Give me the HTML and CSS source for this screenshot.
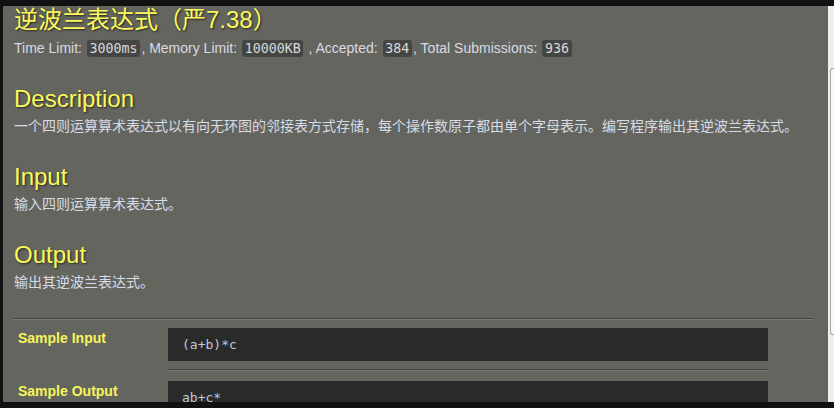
FILE: index.html
```html
<!DOCTYPE html>
<html lang="zh">
<head>
<meta charset="utf-8">
<title>逆波兰表达式</title>
<link rel="stylesheet" href="styles.css">
</head>
<body>
<div class="window">
  <main class="panel">
    <div class="content">
      <h1 class="title">逆波兰表达式（严7.38）</h1>
      <div class="meta">Time Limit: <code class="badge">3000ms</code>, Memory Limit: <code class="badge">10000KB</code> , Accepted: <code class="badge">384</code>, Total Submissions: <code class="badge">936</code></div>

      <h2 class="heading">Description</h2>
      <p class="text">一个四则运算算术表达式以有向无环图的邻接表方式存储，每个操作数原子都由单个字母表示。编写程序输出其逆波兰表达式。</p>

      <h2 class="heading">Input</h2>
      <p class="text">输入四则运算算术表达式。</p>

      <h2 class="heading">Output</h2>
      <p class="text">输出其逆波兰表达式。</p>

      <hr class="rule">

      <div class="samples">
        <div class="label">Sample Input</div>
        <div class="cell">
          <pre class="sample">(a+b)*c</pre>
          <hr class="rule rule-cell">
        </div>
        <div class="label">Sample Output</div>
        <div class="cell">
          <pre class="sample">ab+c*</pre>
        </div>
      </div>
    </div>
  </main>
  <div class="scrollbar"><div class="thumb"></div></div>
</div>
</body>
</html>
```

FILE: styles.css
```css
html, body {
  margin: 0;
  padding: 0;
  background: #111111;
  overflow: hidden;
}

.window {
  display: flex;
  margin: 6px 0 0 3px;
  width: 831px;
  height: 396px;
}

.panel {
  flex: 1;
  background: #65655f;
  overflow: hidden;
  padding-left: 10px;
}

.content {
  width: 800px;
  font-family: "Liberation Sans", "Noto Sans CJK SC", sans-serif;
  color: #d8dbe4;
}

.title {
  margin: 0;
  font-size: 24px;
  line-height: 28px;
  font-weight: normal;
  color: #fafa5c;
  text-shadow: 1px 1px 2px #262622;
  padding-left: 1px;
}

.meta {
  margin-top: 3.5px;
  font-size: 14px;
  line-height: 20px;
  padding-left: 1px;
}

.badge {
  font-family: "DejaVu Sans Mono", "Liberation Mono", monospace;
  font-size: 13.3px;
  line-height: 14px;
  background: #454543;
  color: #d8d8d8;
  border-radius: 3px;
  padding: 1px 2.5px;
  margin: 0 1.25px;
}

.heading {
  margin: 27px 0 3px;
  font-size: 24px;
  line-height: 28px;
  font-weight: normal;
  color: #fafa5c;
  text-shadow: 1px 1px 2px #262622;
  padding-left: 1px;
}

.text {
  margin: 0;
  font-size: 14px;
  line-height: 20px;
  padding-left: 1px;
}

.rule {
  margin: 26px 0 0;
  border: 0;
  border-top: 1px solid #42423e;
  border-bottom: 1px solid #7c7c75;
  height: 0;
}

.samples {
  display: grid;
  grid-template-columns: 155px 600px;
  margin-top: 8px;
}

.label {
  padding-left: 5px;
  font-size: 14px;
  line-height: 20px;
  font-weight: bold;
  color: #f5f55a;
}

.cell {
  display: flex;
  flex-direction: column;
}

.sample {
  margin: 0;
  background: #2a2a2a;
  color: #bcc9dc;
  font-family: "DejaVu Sans Mono", "Liberation Mono", monospace;
  font-size: 13px;
  line-height: 15px;
  padding: 9px 14px;
}

.rule-cell {
  margin: 8px 0 10px;
}

.scrollbar {
  width: 6px;
  background: #efefef;
}

.thumb {
  margin: 62px 0 0 2px;
  height: 265px;
  border: 1px solid #a8a8a8;
  border-right: 0;
  border-radius: 3px 0 0 3px;
  background: #f8f8f8;
}
```
